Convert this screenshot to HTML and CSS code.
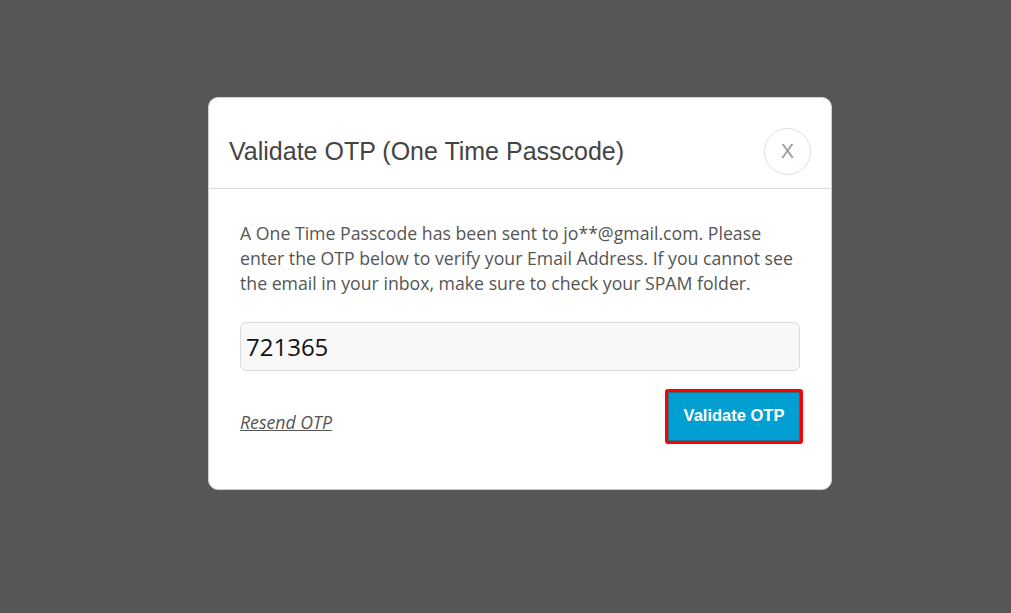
FILE: index.html
```html
<!DOCTYPE html>
<html>
<head>
<meta charset="utf-8">
<link rel="stylesheet" href="styles.css">
</head>
<body>
<div class="overlay">
  <div class="modal">
    <div class="modal-header">
      <h2 class="modal-title">Validate OTP (One Time Passcode)</h2>
      <button class="close-btn">X</button>
    </div>
    <div class="modal-body">
      <p class="message">A One Time Passcode has been sent to jo**@gmail.com. Please enter the OTP below to verify your Email Address. If you cannot see the email in your inbox, make sure to check your SPAM folder.</p>
      <input class="otp-input" type="text" value="721365">
      <div class="actions">
        <a class="resend" href="#">Resend OTP</a>
        <button class="validate-btn">Validate OTP</button>
      </div>
    </div>
  </div>
</div>
</body>
</html>
```
FILE: styles.css
```css
html, body {
  margin: 0;
  padding: 0;
  height: 100%;
  background: #565656;
}
.overlay {
  padding: 97px 0 0 208px;
}
.modal {
  width: 624px;
  height: 393px;
  box-sizing: border-box;
  background: #fff;
  border: 1px solid #d0d0d0;
  border-radius: 10px;
}
.modal-header {
  height: 91px;
  border-bottom: 1px solid #dcdcdc;
  display: flex;
  align-items: center;
  justify-content: space-between;
  padding: 16px 20px 0 20px;
  box-sizing: border-box;
}
.modal-title {
  margin: 0;
  font-family: "Liberation Sans", Arial, sans-serif;
  font-weight: normal;
  font-size: 25px;
  color: #444;
}
.close-btn {
  width: 47px;
  height: 47px;
  border-radius: 50%;
  border: 1px solid #dedede;
  background: #fff;
  color: #9a9a9a;
  font-family: "Liberation Sans", Arial, sans-serif;
  font-size: 20px;
  padding: 0;
  margin-top: 0;
}
.modal-body {
  padding: 32px 31px 0 31px;
}
.message {
  margin: 0;
  font-family: "Open Sans", sans-serif;
  font-size: 17.7px;
  line-height: 25px;
  color: #555;
}
.otp-input {
  display: block;
  width: 100%;
  box-sizing: border-box;
  height: 49px;
  margin-top: 26px;
  border: 1px solid #dcdcdc;
  border-radius: 6px;
  background: #f8f8f8;
  font-family: "Open Sans", sans-serif;
  font-size: 24px;
  color: #111;
  padding: 0 5px;
}
.actions {
  display: flex;
  justify-content: space-between;
  align-items: center;
  margin-top: 18px;
}
.resend {
  font-family: "Open Sans", sans-serif;
  font-style: italic;
  font-size: 17.7px;
  color: #555;
  text-decoration: underline;
  margin-top: 11px;
}
.validate-btn {
  width: 138px;
  height: 55px;
  margin-right: -3px;
  box-sizing: border-box;
  border: 3px solid #f00;
  border-radius: 3px;
  box-shadow: inset 0 0 0 1px #2a6f8c;
  background: #02a0d2;
  color: #fff;
  font-family: "Liberation Sans", Arial, sans-serif;
  font-weight: bold;
  font-size: 16.5px;
  padding: 0 0 2px 0;
}
```
